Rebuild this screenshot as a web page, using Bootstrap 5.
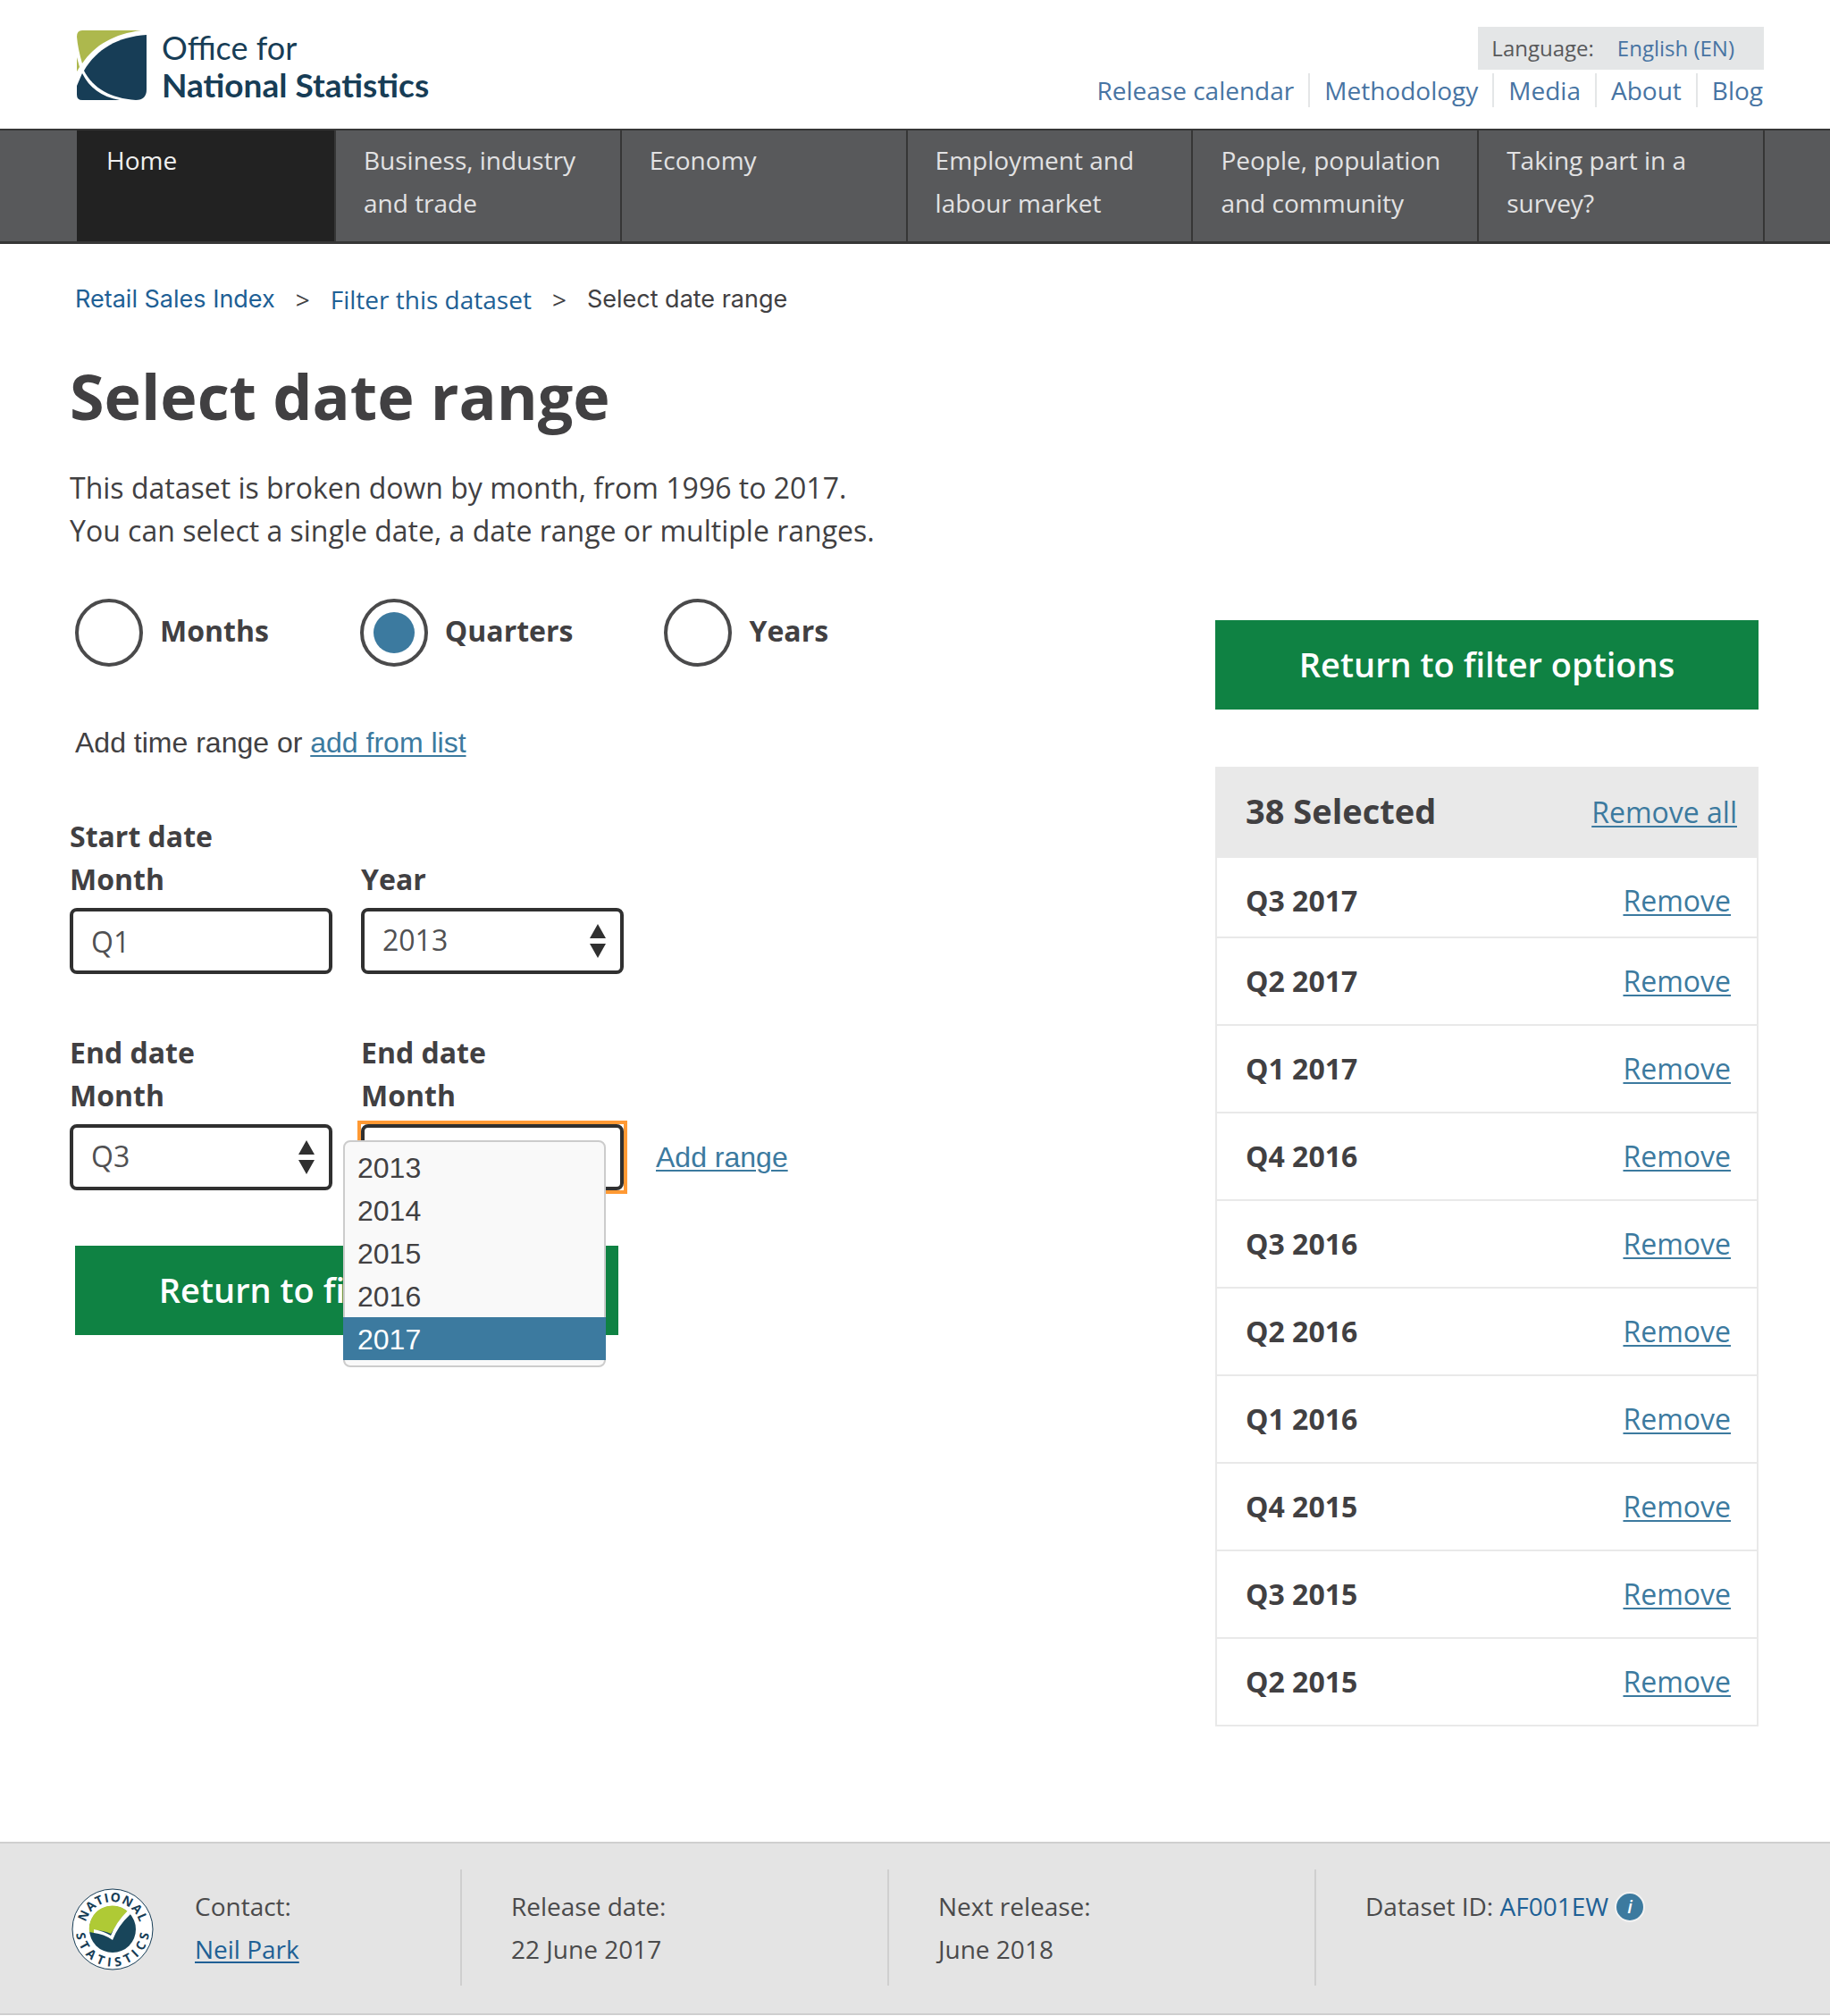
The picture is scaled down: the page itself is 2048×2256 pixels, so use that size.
<!DOCTYPE html>
<html lang="en">
<head>
<meta charset="utf-8">
<meta name="viewport" content="width=device-width, initial-scale=1">
<title>Select date range - Office for National Statistics</title>
<link href="https://cdn.jsdelivr.net/npm/bootstrap@5.3.0/dist/css/bootstrap.min.css" rel="stylesheet">
<style>
  body { font-family: "Open Sans", sans-serif; font-size: 32px; line-height: 48px; color: #414042; background: #fff; }
  a { color: #3c7a9f; text-decoration-thickness: 2px; text-underline-offset: 3px; }
  .arial { font-family: "Liberation Sans", Arial, sans-serif; }

  .site-head { padding: 30px 74px 24px 86px; }
  .brand { color: #173d56; text-decoration: none; gap: 17px; padding-top: 4px; }
  .brand-name { font-family: Lato, "Open Sans", sans-serif; font-size: 36px; line-height: 42px; margin-top: -2px; }
  .brand-name b { font-size: 37px; }
  .lang-box { background: #e4e6e7; font-size: 24px; padding: 0 33px 0 15px; gap: 26px; color: #58595b; }
  .lang-box a, .top-links a { color: #4774a3; text-decoration: none; }
  .top-links { font-size: 28px; line-height: 38px; margin-top: 4px; padding-right: 1px; }
  .top-links li + li { border-left: 2px solid #e4e6e7; margin-left: 16px; padding-left: 16px; }

  .main-nav { background: #58595b; border-top: 2px solid #363636; border-bottom: 3px solid #363636; padding: 0 73px 0 86px; font-size: 28px; }
  .main-nav a { display: block; flex: 1 1 0; padding: 9px 24px 19px 31px; color: #e2e2e3; text-decoration: none; border-right: 2px solid #363636; }
  .main-nav a.active { flex: 0 0 290px; padding-left: 33px; background: #222; color: #f0f0f0; }

  .page { padding: 38px 80px 129px 78px; }
  .crumbs { font-size: 28px; padding-left: 6px; gap: 23px; }
  .crumbs a { color: #206095; text-decoration: none; }
  .crumbs .crumb-alt { font-family: Inter, sans-serif; font-size: 27px; }
  h1 { font-size: 70px; line-height: 96px; font-weight: 700; margin: 36px 0 31px; }

  .periods { gap: 102px; padding-left: 6px; margin-top: 52px; }
  .period { gap: 19px; }
  .periods label { font-weight: 700; padding-bottom: 4px; }
  .dial { appearance: none; width: 76px; height: 76px; margin: 0; border: 4px solid #4a4a4b; border-radius: 50%; padding: 11px; background-clip: content-box; }
  .dial:checked { background-color: #3c7a9f; }

  .hint { margin: 61px 0 57px 6px; }
  .fields { gap: 32px; }
  .fields + .fields { margin-top: 64px; }
  .field { width: 294px; position: relative; }
  .field label { display: block; font-weight: 700; margin-bottom: 8px; }
  .field .form-control, .field .form-select { height: 74px; border: 4px solid #303030; border-radius: 8px; padding: 0 20px; font-size: 32px; line-height: 48px; color: #505052; background-color: #fff; }
  .field .form-select { padding-bottom: 2px; background-image: url("data:image/svg+xml,%3Csvg xmlns='http://www.w3.org/2000/svg' viewBox='0 0 18 38'%3E%3Cpath fill='%23303030' d='M9 0l9 16H0zM0 22h18L9 38z'/%3E%3C/svg%3E"); background-size: 18px 38px; background-position: right 16px center; }
  .field-ring { outline: 4px solid #ff9933; }
  .year-menu { position: absolute; left: -20px; bottom: -198px; width: 294px; z-index: 2; margin: 0; padding: 4px 0 6px; background: #f9f9f9; border: 2px solid #ccc; border-radius: 8px; }
  .year-menu button { display: block; width: calc(100% + 4px); margin: 0 -2px; padding: 2px 16px 0; line-height: 46px; border: 0; background: none; text-align: left; color: #414042; }
  .year-menu [aria-selected=true] button { background: #3c7a9f; color: #fff; }
  .add-range { line-height: 74px; margin-left: 4px; }

  .btn-go { width: 608px; height: 100px; border: 0; border-radius: 0; background: #0f8243; color: #fff; font-size: 38px; font-weight: 600; padding: 0 0 2px; }
  .btn-go:hover { background: #0c6b37; color: #fff; }
  .form-go { margin: 62px 0 0 6px; }

  .picked { width: 608px; margin-top: 383px; }
  .picked-head { background: #e9e9e9; height: 102px; padding: 0 24px 0 34px; margin-top: 64px; }
  .picked-head h2 { font-size: 38px; line-height: 48px; font-weight: 700; margin: 0 0 4px; }
  .picked-list li { border: 2px solid #e9e9e9; border-top: 0; padding: 24px 29px 24px 32px; }
  .picked-list li:first-child { padding-bottom: 16px; }

  .meta-bar { background: #e4e4e4; border-top: 2px solid #cfcfcf; border-bottom: 2px solid #cfcfcf; padding: 29px 80px 31px; font-size: 28px; color: #4a4a4b; }
  .meta-cell { height: 130px; padding-top: 17px; }
  .meta-cell + .meta-cell { border-left: 2px solid #cfcfcf; padding-left: 55px; flex: 0 0 478px; }
  .meta-cell a { color: #206095; }
  .contact-cell { flex: 0 0 435px; gap: 46px; }
  .info-dot { vertical-align: -7px; }
</style>
</head>
<body>
<header class="site-head d-flex justify-content-between align-items-start">
  <a href="#" class="brand d-flex align-items-start">
    <svg width="78" height="78" viewBox="0 0 78 78" aria-hidden="true">
      <path fill="#adb84d" d="M0 7Q0 0 6 0H72C42 4 20 16 6 37Q1 20 0 7z"/>
      <path fill="#adb84d" d="M0 30L3 41 0 46z"/>
      <path fill="#173d56" d="M78 5V66Q78 78 66 78C38 76 18 65 8 45C22 21 46 7 78 5z"/>
      <path fill="#173d56" d="M6 48C14 64 27 74 48 78H6Q0 78 0 72V62z"/>
    </svg>
    <span class="brand-name">Office for<br><b>National Statistics</b></span>
  </a>
  <div class="d-flex flex-column align-items-end">
    <div class="lang-box d-flex"><span>Language:</span><a href="#">English (EN)</a></div>
    <ul class="top-links list-unstyled d-flex mb-0">
      <li><a href="#">Release calendar</a></li>
      <li><a href="#">Methodology</a></li>
      <li><a href="#">Media</a></li>
      <li><a href="#">About</a></li>
      <li><a href="#">Blog</a></li>
    </ul>
  </div>
</header>

<nav class="main-nav d-flex" aria-label="Main">
  <a href="#" class="active" aria-current="page">Home</a>
  <a href="#">Business, industry and trade</a>
  <a href="#">Economy</a>
  <a href="#">Employment and labour market</a>
  <a href="#">People, population and community</a>
  <a href="#">Taking part in a survey?</a>
</nav>

<main class="page d-flex justify-content-between align-items-start">
  <div>
    <nav class="crumbs d-flex" aria-label="Breadcrumb">
      <a href="#" class="crumb-alt">Retail Sales Index</a><span>&gt;</span>
      <a href="#">Filter this dataset</a><span>&gt;</span>
      <span class="crumb-alt" aria-current="page">Select date range</span>
    </nav>
    <h1>Select date range</h1>
    <p class="mb-0">This dataset is broken down by month, from 1996 to 2017.<br>You can select a single date, a date range or multiple ranges.</p>

    <form>
      <div class="periods d-flex">
        <div class="period d-flex align-items-center"><input class="dial" type="radio" name="period" id="months"><label for="months">Months</label></div>
        <div class="period d-flex align-items-center"><input class="dial" type="radio" name="period" id="quarters" checked><label for="quarters">Quarters</label></div>
        <div class="period d-flex align-items-center"><input class="dial" type="radio" name="period" id="years"><label for="years">Years</label></div>
      </div>

      <p class="hint arial">Add time range or <a href="#">add from list</a></p>

      <div class="fields d-flex align-items-end">
        <div class="field"><label for="start-month">Start date<br>Month</label><input class="form-control" type="text" id="start-month" value="Q1"></div>
        <div class="field"><label for="start-year">Year</label><select class="form-select" id="start-year"><option>2013</option></select></div>
      </div>

      <div class="fields d-flex align-items-end">
        <div class="field"><label for="end-month">End date<br>Month</label><select class="form-select" id="end-month"><option>Q3</option></select></div>
        <div class="field">
          <label for="end-year">End date<br>Month</label>
          <div class="field-ring"><select class="form-select" id="end-year"><option></option></select></div>
          <ul class="year-menu list-unstyled arial" role="listbox" aria-label="Year">
            <li role="option"><button type="button">2013</button></li>
            <li role="option"><button type="button">2014</button></li>
            <li role="option"><button type="button">2015</button></li>
            <li role="option"><button type="button">2016</button></li>
            <li role="option" aria-selected="true"><button type="button">2017</button></li>
          </ul>
        </div>
        <a href="#" class="add-range arial">Add range</a>
      </div>

      <button type="button" class="btn btn-go form-go d-block">Return to filter options</button>
    </form>
  </div>

  <aside class="picked">
    <button type="button" class="btn btn-go d-block w-100">Return to filter options</button>
    <div class="picked-head d-flex justify-content-between align-items-center">
      <h2>38 Selected</h2><a href="#">Remove all</a>
    </div>
    <ul class="picked-list list-unstyled mb-0">
      <li class="d-flex justify-content-between"><b>Q3 2017</b><a href="#">Remove</a></li>
      <li class="d-flex justify-content-between"><b>Q2 2017</b><a href="#">Remove</a></li>
      <li class="d-flex justify-content-between"><b>Q1 2017</b><a href="#">Remove</a></li>
      <li class="d-flex justify-content-between"><b>Q4 2016</b><a href="#">Remove</a></li>
      <li class="d-flex justify-content-between"><b>Q3 2016</b><a href="#">Remove</a></li>
      <li class="d-flex justify-content-between"><b>Q2 2016</b><a href="#">Remove</a></li>
      <li class="d-flex justify-content-between"><b>Q1 2016</b><a href="#">Remove</a></li>
      <li class="d-flex justify-content-between"><b>Q4 2015</b><a href="#">Remove</a></li>
      <li class="d-flex justify-content-between"><b>Q3 2015</b><a href="#">Remove</a></li>
      <li class="d-flex justify-content-between"><b>Q2 2015</b><a href="#">Remove</a></li>
    </ul>
  </aside>
</main>

<footer class="meta-bar d-flex">
  <div class="meta-cell contact-cell d-flex">
    <svg width="92" height="92" viewBox="-46 -46 92 92" class="mt-1" role="img" aria-label="National Statistics">
      <defs><path id="arc-top" d="M-30 8A31 31 0 1 1 30 8"/><path id="arc-low" d="M-39 -12A41 41 0 1 0 39 -12"/></defs>
      <circle r="45" fill="#fff" stroke="#173d56"/>
      <circle r="26" fill="#18455a"/>
      <path fill="#afca35" d="M-26 3A26 26 0 0 1 17 -20C8 -12 3 -2 -2 5Q-10 1 -21 1V4z"/>
      <path fill="#fff" d="M-21 0Q-10 2 -2 7Q4 -8 17 -21L20 -17Q6 -4 0 12Q-10 5 -21 4z"/>
      <g fill="#173d56" font-family="Open Sans, sans-serif" font-size="14" font-weight="700" text-anchor="middle">
        <text dx="0 1 1 1 1 1 1 1"><textPath href="#arc-top" startOffset="50%">NATIONAL</textPath></text>
        <text dx="0 5 5 5 5 5 5 5 5 5"><textPath href="#arc-low" startOffset="50%">STATISTICS</textPath></text>
      </g>
    </svg>
    <div>Contact:<br><a href="#">Neil Park</a></div>
  </div>
  <div class="meta-cell">Release date:<br>22 June 2017</div>
  <div class="meta-cell">Next release:<br>June 2018</div>
  <div class="meta-cell">Dataset ID: <a href="#" class="text-decoration-none">AF001EW</a>
    <svg class="info-dot" width="34" height="34" viewBox="0 0 34 34" role="img" aria-label="Information"><circle cx="17" cy="17" r="16" fill="#3c7a9f" stroke="#f2f2f2" stroke-width="2"/><text x="17" y="24" text-anchor="middle" fill="#fff" font-family="Open Sans, sans-serif" font-size="20" font-style="italic" font-weight="600">i</text></svg>
  </div>
</footer>
<script src="https://cdn.jsdelivr.net/npm/bootstrap@5.3.0/dist/js/bootstrap.bundle.min.js"></script>
</body>
</html>
